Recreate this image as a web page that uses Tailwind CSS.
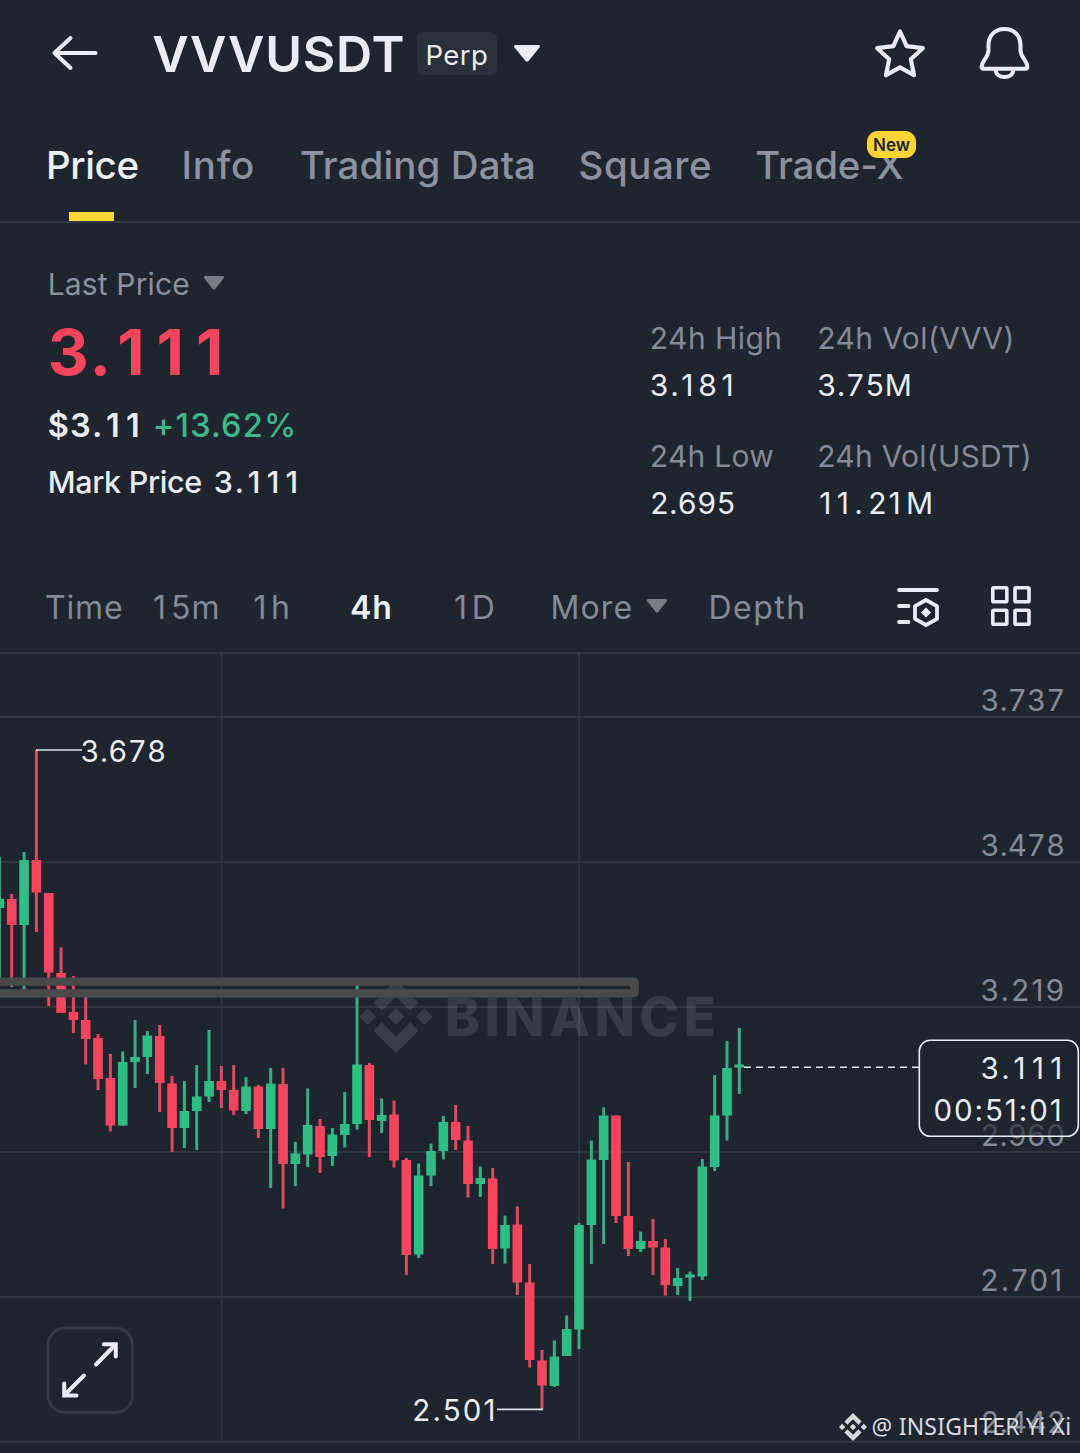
<!DOCTYPE html>
<html lang="en">
<head>
<meta charset="utf-8">
<title>VVVUSDT Perp</title>
<script src="https://cdn.jsdelivr.net/npm/@tailwindcss/browser@4"></script>
</head>
<body class="w-[1080px] h-[1453px] overflow-hidden bg-[#1f252f] font-['Inter',sans-serif] text-[#eaecf4] whitespace-nowrap">

<header class="flex h-[106px] items-center">
  <svg class="ml-[50px] h-[40px] w-[50px]" viewBox="50 33 50 40" fill="none" stroke="#eaecf4" stroke-width="4" stroke-linecap="round" stroke-linejoin="round"><path d="M95.500 53H55M70.500 38L54.500 53l16 15"/></svg>
  <h1 class="ml-[52.200px] w-[264.800px] pt-[2px] text-[50px] leading-[60px] font-semibold tracking-[.8px]">VVVUSDT</h1>
  <div class="mt-px h-[43px] w-[80px] rounded-[6px] bg-[#2a303a] pl-[8.400px] text-[27.500px] leading-[46px] tracking-[.5px]">Perp</div>
  <svg class="ml-[16px] h-[19px] w-[28px]" viewBox="513 44 28 19" fill="#eaecf4"><path d="M515.500 45h23q2.500 .5 1 2.500l-11 13.500q-1.500 1.500-3 0l-11-13.500q-1.500-2 1-2.500z"/></svg>
  <svg class="ml-[332px] h-[54px] w-[54px]" viewBox="873 26 54 54" fill="none" stroke="#eaecf4" stroke-width="4.200" stroke-linejoin="round"><path d="M900 31.500l6.600 14.700 16.200 2-12 11 3.200 16-14-7.800-14 7.800 3.200-16-12-11 16.200-2z"/></svg>
  <svg class="ml-[50px] h-[56px] w-[56px]" viewBox="977 25 56 56" fill="none" stroke="#eaecf4" stroke-width="4" stroke-linejoin="round"><path d="M1004.500 29c-10 0-16 7-16 16v5c0 8-6.800 10-6.800 17 0 1.300.7 1.800 1.800 1.800h42c1.100 0 1.800-.5 1.800-1.800 0-7-6.800-9-6.800-17v-5c0-9-6-16-16-16zM995.500 69c0 5 4 8 9 8s9-3 9-8"/></svg>
</header>

<nav class="relative grid h-[117px] grid-cols-[134.400px_119.300px_278.900px_176.600px_auto] border-b-2 border-[#323843] pl-[46px] text-[38.500px] leading-[118px] font-medium text-[#8b919e]">
  <a class="tracking-[-.4px] text-[#eef0f7]">Price</a>
  <a class="pl-px tracking-[.8px]">Info</a>
  <a class="tracking-[.1px]">Trading Data</a>
  <a class="tracking-[.5px]">Square</a>
  <a class="tracking-[-.170px]">Trade-X</a>
  <span class="absolute top-[106px] left-[69px] h-[9px] w-[45px] bg-[#fcd535]"></span>
  <span class="absolute top-[25px] left-[867px] h-[27px] w-[49px] rounded-[11px] bg-[#fcd535] text-center text-[17px] leading-[28px] font-semibold text-[#1f252f]">New</span>
</nav>

<section class="flex h-[337px]">
  <div class="w-[649.800px] pt-[41px] pl-[47.700px]">
    <div class="flex items-center text-[30px] leading-[40px] tracking-[.150px] text-[#8b919e]">Last Price
      <svg class="mb-[2px] ml-[13px] h-[16px] w-[22px]" viewBox="0 0 22 16" fill="#777e89"><path d="M2 1h18q2 .5 1 2l-8.800 11q-1.200 1.200-2.400 0L1 3q-1-1.500 1-2z"/></svg>
    </div>
    <div class="mt-[8px] text-[63.500px] leading-[80px] font-bold tracking-[12px] text-[#f6465d]"><span class="tracking-[1px]">3</span>.111</div>
    <div class="mt-[14px] flex text-[32.500px] leading-[40px]">
      <span class="w-[105px] font-semibold tracking-[6.500px]"><span class="tracking-[1.200px]">$3</span>.11</span>
      <span class="font-medium tracking-[1.150px] text-[#3eb78a]">+13.62%</span>
    </div>
    <div class="mt-[16px] flex text-[30.500px] leading-[40px] font-medium">
      <span class="w-[166px] tracking-[-.33px]">Mark Price</span>
      <span class="tracking-[6.300px]"><span class="tracking-[2px]">3</span>.111</span>
    </div>
  </div>
  <dl class="grid h-fit grid-cols-[167.500px_auto] gap-y-[24px] pt-[92px] text-[30px] leading-[47px]">
    <div><dt class="tracking-[.450px] text-[#848a96]">24h High</dt><dd class="tracking-[4.800px]"><span class="tracking-[2px]">3</span>.181</dd></div>
    <div><dt class="tracking-[.400px] text-[#848a96]">24h Vol(VVV)</dt><dd class="tabular-nums tracking-[.290px]">3.75M</dd></div>
    <div><dt class="tracking-[.280px] text-[#848a96]">24h Low</dt><dd class="tabular-nums tracking-[.090px]">2.695</dd></div>
    <div><dt class="tracking-[.240px] text-[#848a96]">24h Vol(USDT)</dt><dd class="pl-[2px] tracking-[5.300px]">11.<span class="tracking-[2px]">2</span>1M</dd></div>
  </dl>
</section>

<div class="grid h-[92px] grid-cols-[108.100px_99.500px_97.500px_103px_97.500px_96px_61px_188.500px_94px_auto] items-center pl-[44.900px] text-[32px] leading-[95px] text-[#848a96]">
  <span class="tracking-[.850px]">Time</span>
  <span class="tracking-[5px]">1<span class="tracking-[1px]">5m</span></span>
  <span class="pl-px tracking-[4.500px]">1h</span>
  <span class="font-semibold tracking-[1px] text-[#eef0f7]">4h</span>
  <span class="pl-px tracking-[4.800px]">1D</span>
  <span class="tracking-[1.130px]">More</span>
  <svg class="mb-[3px] h-[16px] w-[22px]" viewBox="0 0 22 16" fill="#777e89"><path d="M2 1h18q2 .5 1 2l-8.800 11q-1.200 1.200-2.400 0L1 3q-1-1.500 1-2z"/></svg>
  <span class="pl-px tracking-[1.500px]">Depth</span>
  <svg class="mb-[3px] h-[44px] w-[46px]" viewBox="896 584 46 44" fill="none" stroke="#eaecf4" stroke-width="3.800" stroke-linecap="round" stroke-linejoin="round"><path d="M899 590h38M899 606h9.500M899 622h9.500M926 600l11 6.200v12.600l-11 6.200-11-6.200v-12.600z"/><path d="M926 607.500l5 5-5 5-5-5z" fill="#eaecf4" stroke="none"/></svg>
  <svg class="mb-[3px] h-[44px] w-[44px]" viewBox="990 584 44 44" fill="none" stroke="#eaecf4" stroke-width="3.600"><rect x="992.800" y="587.800" width="14" height="14" rx="1"/><rect x="1015" y="587.800" width="14" height="14" rx="1"/><rect x="992.800" y="610.200" width="14" height="14" rx="1"/><rect x="1015" y="610.200" width="14" height="14" rx="1"/></svg>
</div>

<svg class="block h-[801px] w-[1080px] text-[29.500px]" viewBox="0 652 1080 801">
  <defs>
    <symbol id="logo" viewBox="0 0 126.610 126.610"><path d="M38.730 53.200L63.320 28.620l24.600 24.600 14.310-14.310L63.320 0l-38.900 38.900zM0 63.310L14.300 49l14.300 14.310-14.300 14.310zM38.730 73.410L63.320 98l24.600-24.600 14.310 14.300-38.910 38.910-38.900-38.900zM98 63.310L112.300 49l14.310 14.310-14.310 14.310zM77.830 63.300L63.320 48.780 48.790 63.300l14.530 14.530z"/></symbol>
  </defs>
  <use href="#logo" x="359.500" y="980" width="73" height="73" fill="#373d47"/>
  <text x="444.700" y="1036" class="fill-[#353b45] text-[53px] font-extrabold tracking-[4.500px]">BINANCE</text>
  <path d="M0 653h1080" stroke="#2d333d" stroke-width="2.500"/>
  <path d="M0 717h1080M0 862h1080M0 1007h1080M0 1152h1080M0 1297h1080M0 1442h1080M221.500 653v789M579 653v789" stroke="#fff" stroke-opacity=".08" stroke-width="1.800"/>
  <g id="candles"></g>
  <rect x="-20" y="981.600" width="654.600" height="11.800" rx="1" fill="none" stroke="#4a4a4a" stroke-width="8.400"/>
  <path d="M36 750h46M497 1409.300h46" stroke="#dfe2ea" stroke-width="1.700"/>
  <g class="fill-[#eaecf4]">
    <text x="80.600" y="762" class="tabular-nums tracking-[.3px]">3.678</text>
    <text x="412.200" y="1421" class="tracking-[2.200px]">2.501</text>
  </g>
  <g class="fill-[#848a96]">
    <text x="980.600" y="711" class="tabular-nums tracking-[.1px]">3.737</text>
    <text x="980.600" y="856" class="tabular-nums">3.478</text>
    <text x="980.600" y="1001" class="tracking-[2.300px]">3.219</text>
    <text x="980.600" y="1146" class="tabular-nums">2.960</text>
    <text x="980.600" y="1291" class="tracking-[2.200px]">2.701</text>
    <text x="980.600" y="1433" class="tabular-nums tracking-[.2px]">2.442</text>
  </g>
  <path d="M744 1067.300h175" stroke="#e4e7ee" stroke-width="1.600" stroke-dasharray="7 5"/>
  <rect x="919.300" y="1040.300" width="159" height="96" rx="11" fill="#1f252f" fill-opacity=".65" stroke="#eaecf4" stroke-width="1.600"/>
  <g class="fill-[#eaecf4]">
    <text x="980.600" y="1079" class="tracking-[6.300px]"><tspan class="tracking-[2.500px]">3</tspan>.111</text>
    <text x="933.600" y="1121" class="tracking-[1.900px]">00:51:01</text>
  </g>
  <rect x="48" y="1328" width="84.500" height="84.500" rx="17" fill="none" stroke="#343a44" stroke-width="2.800"/>
  <path d="M96 1364.500l19.500-20M103.800 1344.300h12v12.300M84 1375.500l-19.500 19.500M64.200 1383.500v12h12.300" fill="none" stroke="#eaecf4" stroke-width="4" stroke-linecap="round" stroke-linejoin="miter"/>
  <use href="#logo" x="839" y="1413" width="28" height="28" fill="#d5d7db"/>
  <text x="871.600" y="1435" class="fill-[#d9dbe0] font-['Noto_Sans',sans-serif] text-[23px] tracking-[.2px]">@ INSIGHTER Yi Xi</text>
</svg>

<script>
// Each candle: direction (u/d), high, body top, body bottom, low in chart pixels
const candles = [
['u',857,899,908,980],['d',894,899,925,987],['u',852,860,925,989],['d',750,860,892.5,932],['d',893,893,972.5,1006],
['d',947.5,973,1013,1013],['d',976,1012,1020,1033],['d',992,1020,1039,1064.5],['d',1034,1038,1079,1090],['d',1054,1078,1125.5,1131.5],
['u',1051.5,1062,1125.5,1125.5],['u',1020,1057,1062,1088],['u',1031,1035.5,1057,1074],['d',1025,1036,1083,1112],['d',1076,1083.5,1128,1152],
['u',1081,1111,1128,1148],['u',1065,1096.5,1111,1150],['u',1030,1081,1096.5,1102],['d',1066,1081,1090,1108],['d',1065,1090,1110.5,1115],
['u',1077,1086.5,1111,1114],['d',1085,1086.5,1129,1138],['u',1068,1083.5,1129,1188],['d',1068,1084,1164,1208.5],['u',1142,1153.5,1164,1186],
['u',1088.5,1125,1154.5,1167],['d',1119,1126,1157,1173],['u',1128,1134.5,1156,1166],['u',1092,1124,1135,1147.5],['u',985,1064.5,1124,1129.5],
['d',1063,1065,1120,1157],['u',1098.5,1115,1121,1133],['d',1100.5,1114.5,1160.5,1167.5],['d',1158,1160,1255,1275],['u',1163.5,1175.5,1254.5,1258],
['u',1143.5,1151,1175.5,1186],['u',1116,1122,1151,1159.5],['d',1105,1122,1140,1150],['d',1126,1140.5,1184,1197.5],['u',1166.5,1178,1184,1197],
['d',1168,1178.5,1249,1264],['u',1215.5,1225,1248.5,1263.5],['d',1206.5,1224.5,1282.5,1295],['d',1264,1282.5,1360,1367.5],['d',1350,1360.5,1385.5,1409],
['u',1340.5,1356.5,1386,1387],['u',1315.5,1329,1356,1356],['u',1223,1225,1329.5,1349],['u',1140.5,1159.5,1225,1264],['u',1107.5,1115.5,1160,1244],
['d',1115.5,1115.5,1216,1223],['d',1162,1216,1249,1256],['u',1231.5,1241,1249,1252],['d',1219,1241,1247.5,1275],['d',1239,1247.5,1285,1295.5],
['u',1268,1278,1286,1295],['u',1271.5,1274.5,1277.5,1301],['u',1159,1166.5,1276.5,1280],['u',1075,1115.5,1167,1171],['u',1041,1068,1115.5,1140.5],
['u',1028,1064.5,1067.5,1094]];
document.getElementById('candles').innerHTML = candles.map(([d, h, t, b, l], i) => {
  const x = -0.6 + 12.332 * i, up = d === 'u';
  return `<rect x="${x - 1.5}" y="${h}" width="3" height="${l - h}" fill="${up ? '#37ae83' : '#df4a60'}"/><rect x="${x - 4.8}" y="${t}" width="9.6" height="${b - t}" fill="${up ? '#2ebd85' : '#f6465d'}"/>`;
}).join('');
</script>
</body>
</html>
